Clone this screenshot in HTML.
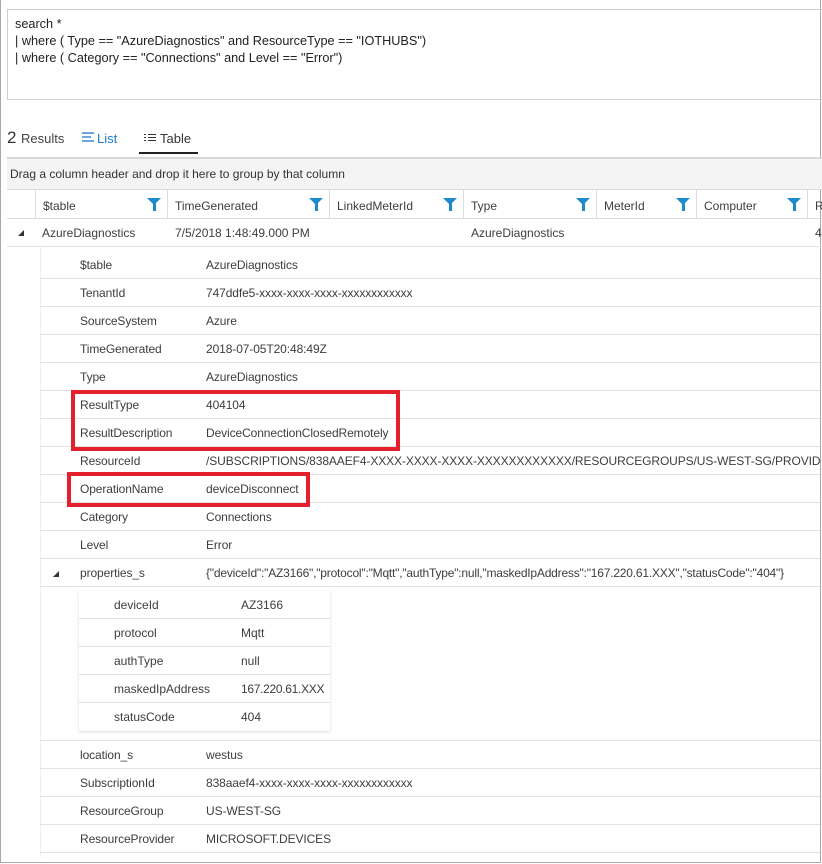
<!DOCTYPE html>
<html><head><meta charset="utf-8"><style>
*{margin:0;padding:0;box-sizing:border-box}
body{width:822px;height:864px;background:#fff;font-family:"Liberation Sans",sans-serif;font-size:12px;color:#3d3d3d;position:relative;overflow:hidden}
.a{position:absolute}
.frame{left:0;top:0;width:821px;height:863px;border:1px solid #a8a8a8;border-top:none}
.q{left:7px;top:9px;width:820px;height:91px;border:1px solid #cfcfcf;padding:6px 7px;line-height:17px;color:#222;font-size:12.7px}
.row{position:absolute;left:40px;right:2px;height:28px;border-bottom:1px solid #e2e2e2}
.row span{position:absolute;top:7px;white-space:nowrap;letter-spacing:-0.1px}
.l{left:40px}.v{left:166px}
.n{position:absolute;left:79px;width:251px;height:28px;border-bottom:1px solid #e2e2e2}
.n span{position:absolute;top:7px}
.hd{position:absolute;top:190px;height:29px;border-left:1px solid #dcdcdc;border-bottom:1px solid #dcdcdc}
.hd span{position:absolute;left:7px;top:9px}
.f{position:absolute;right:6px;top:8px;width:0;height:0;border-left:7px solid transparent;border-right:7px solid transparent;border-top:7px solid #1d8ace}
.f:after{content:"";position:absolute;left:-1.5px;top:-2px;width:3px;height:8px;background:#1d8ace}
.red{position:absolute;border:4px solid #e3202b}
.tri{position:absolute;width:0;height:0;border-left:6px solid transparent;border-bottom:6px solid #333}
</style></head><body>
<div class="a frame"></div>
<div class="a q">search *<br>| where ( Type == "AzureDiagnostics" and ResourceType == "IOTHUBS")<br>| where ( Category == "Connections" and Level == "Error")</div>
<div class="a" style="left:7px;top:128px;font-size:17px;color:#333">2</div>
<div class="a" style="left:21px;top:131px;font-size:13px;color:#444">Results</div>
<svg class="a" style="left:82px;top:132px" width="12" height="11"><g stroke="#1d7ac8" stroke-width="1.3"><line x1="0" y1="1" x2="12" y2="1"/><line x1="0" y1="5" x2="9" y2="5"/><line x1="0" y1="9" x2="12" y2="9"/></g></svg>
<div class="a" style="left:97px;top:131px;font-size:13px;color:#1d7ac8">List</div>
<svg class="a" style="left:144px;top:133px" width="13" height="10"><g stroke="#333" stroke-width="1"><line x1="0" y1="1.5" x2="2" y2="1.5"/><line x1="0" y1="4.5" x2="2" y2="4.5"/><line x1="0" y1="7.5" x2="2" y2="7.5"/><line x1="4" y1="1.5" x2="12" y2="1.5"/><line x1="4" y1="4.5" x2="12" y2="4.5"/><line x1="4" y1="7.5" x2="12" y2="7.5"/></g></svg>
<div class="a" style="left:160px;top:131px;font-size:13px;color:#333">Table</div>
<div class="a" style="left:139px;top:152px;width:59px;height:2px;background:#222"></div>
<div class="a" style="left:7px;top:157px;width:815px;height:33px;background:#f4f4f4;border-top:2px solid #d8d8d8;border-bottom:1px solid #dcdcdc"></div>
<div class="a" style="left:10px;top:167px;color:#333">Drag a column header and drop it here to group by that column</div>
<div class="a" style="left:7px;top:190px;width:815px;height:29px;border-bottom:1px solid #dcdcdc"></div>
<div class="hd" style="left:35px;width:132px"><span>$table</span><i class="f"></i></div>
<div class="hd" style="left:167px;width:162px"><span>TimeGenerated</span><i class="f"></i></div>
<div class="hd" style="left:329px;width:134px"><span>LinkedMeterId</span><i class="f"></i></div>
<div class="hd" style="left:463px;width:133px"><span>Type</span><i class="f"></i></div>
<div class="hd" style="left:596px;width:100px"><span>MeterId</span><i class="f"></i></div>
<div class="hd" style="left:696px;width:111px"><span>Computer</span><i class="f"></i></div>
<div class="hd" style="left:807px;width:15px"><span>R</span></div>
<div class="a" style="left:7px;top:219px;width:815px;height:28px;border-bottom:1px solid #e2e2e2"></div>
<i class="tri" style="left:18px;top:230px"></i>
<div class="a" style="left:42px;top:226px">AzureDiagnostics</div>
<div class="a" style="left:175px;top:226px">7/5/2018 1:48:49.000 PM</div>
<div class="a" style="left:471px;top:226px">AzureDiagnostics</div>
<div class="a" style="left:815px;top:226px">4</div>
<div class="a" style="left:40px;top:247px;width:1px;height:610px;background:#eee"></div>

<div class="row" style="top:251px"><span class="l">$table</span><span class="v">AzureDiagnostics</span></div>
<div class="row" style="top:279px"><span class="l">TenantId</span><span class="v">747ddfe5-xxxx-xxxx-xxxx-xxxxxxxxxxxx</span></div>
<div class="row" style="top:307px"><span class="l">SourceSystem</span><span class="v">Azure</span></div>
<div class="row" style="top:335px"><span class="l">TimeGenerated</span><span class="v">2018-07-05T20:48:49Z</span></div>
<div class="row" style="top:363px"><span class="l">Type</span><span class="v">AzureDiagnostics</span></div>
<div class="row" style="top:391px"><span class="l">ResultType</span><span class="v">404104</span></div>
<div class="row" style="top:419px"><span class="l">ResultDescription</span><span class="v">DeviceConnectionClosedRemotely</span></div>
<div class="row" style="top:447px;overflow:hidden"><span class="l">ResourceId</span><span class="v">/SUBSCRIPTIONS/838AAEF4-XXXX-XXXX-XXXX-XXXXXXXXXXXX/RESOURCEGROUPS/US-WEST-SG/PROVIDERS/MICROSOFT</span></div>
<div class="row" style="top:475px"><span class="l">OperationName</span><span class="v">deviceDisconnect</span></div>
<div class="row" style="top:503px"><span class="l">Category</span><span class="v">Connections</span></div>
<div class="row" style="top:531px"><span class="l">Level</span><span class="v">Error</span></div>
<div class="row" style="top:559px;overflow:hidden"><i class="tri" style="left:13px;top:12px"></i><span class="l">properties_s</span><span class="v" style="letter-spacing:-0.2px">{"deviceId":"AZ3166","protocol":"Mqtt","authType":null,"maskedIpAddress":"167.220.61.XXX","statusCode":"404"}</span></div>
<div class="a" style="left:79px;top:591px;width:251px;height:140px;box-shadow:0 1px 3px rgba(0,0,0,.15)"></div>
<div class="n" style="top:591px"><span style="left:35px">deviceId</span><span style="left:162px">AZ3166</span></div>
<div class="n" style="top:619px"><span style="left:35px">protocol</span><span style="left:162px">Mqtt</span></div>
<div class="n" style="top:647px"><span style="left:35px">authType</span><span style="left:162px">null</span></div>
<div class="n" style="top:675px"><span style="left:35px">maskedIpAddress</span><span style="left:162px;letter-spacing:-0.3px">167.220.61.XXX</span></div>
<div class="n" style="top:703px;border-bottom:none"><span style="left:35px">statusCode</span><span style="left:162px">404</span></div>
<div class="a" style="left:40px;top:740px;width:780px;height:1px;background:#e2e2e2"></div>
<div class="row" style="top:741px"><span class="l">location_s</span><span class="v">westus</span></div>
<div class="row" style="top:769px"><span class="l">SubscriptionId</span><span class="v">838aaef4-xxxx-xxxx-xxxx-xxxxxxxxxxxx</span></div>
<div class="row" style="top:797px"><span class="l">ResourceGroup</span><span class="v">US-WEST-SG</span></div>
<div class="row" style="top:825px"><span class="l">ResourceProvider</span><span class="v">MICROSOFT.DEVICES</span></div>

<div class="red" style="left:71px;top:390px;width:329px;height:61px"></div>
<div class="red" style="left:67px;top:472px;width:243px;height:35px"></div>
</body></html>
